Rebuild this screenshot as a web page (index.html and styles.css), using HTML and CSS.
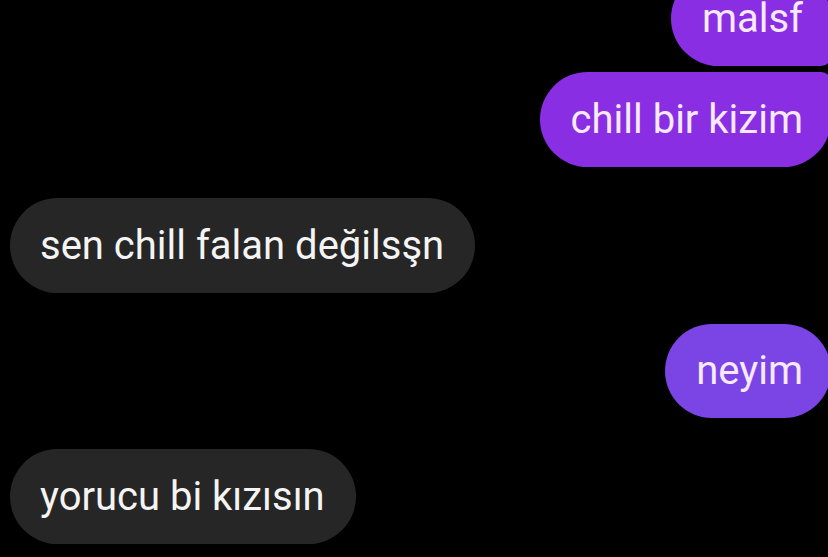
FILE: index.html
```html
<!DOCTYPE html>
<html lang="tr">
<head>
<meta charset="utf-8">
<title>Sohbet</title>
<link rel="stylesheet" href="styles.css">
</head>
<body>
<main class="chat">
  <div class="row row-out"><div class="bubble out group-top">malsf</div></div>
  <div class="row row-out tight"><div class="bubble out group-bottom">chill bir kizim</div></div>
  <div class="row row-in"><div class="bubble in">sen chill falan değilsşn</div></div>
  <div class="row row-out"><div class="bubble out alt">neyim</div></div>
  <div class="row row-in"><div class="bubble in">yorucu bi kızısın</div></div>
</main>
</body>
</html>
```
FILE: styles.css
```css
html, body {
  margin: 0;
  padding: 0;
  background: #000;
  height: 100%;
  overflow: hidden;
}
.chat {
  display: flex;
  flex-direction: column;
  gap: 31px;
  margin-top: -29px;
  padding: 0 0 0 10px;
  font-family: Roboto, "Noto Sans", sans-serif;
}
.row {
  display: flex;
}
.row.tight {
  margin-top: -25px;
}
.row-out {
  justify-content: flex-end;
  margin-right: -3px;
}
.row-in {
  justify-content: flex-start;
}
.bubble {
  height: 95px;
  box-sizing: border-box;
  display: flex;
  align-items: center;
  border-radius: 48px;
  font-size: 40px;
  line-height: 1;
  letter-spacing: 0;
  white-space: nowrap;
}
.bubble.in {
  background: #262626;
  color: #f4f4f4;
  padding: 0 31px 0 30px;
}
.bubble.out {
  background: #8a2ee3;
  color: #f7e9ff;
  padding: 0 28px 0 31px;
}
.bubble.out.alt {
  background: #7b45e6;
  height: 94px;
}
.bubble.group-top {
  border-bottom-right-radius: 10px;
}
.bubble.group-bottom {
  border-top-right-radius: 10px;
}
```
